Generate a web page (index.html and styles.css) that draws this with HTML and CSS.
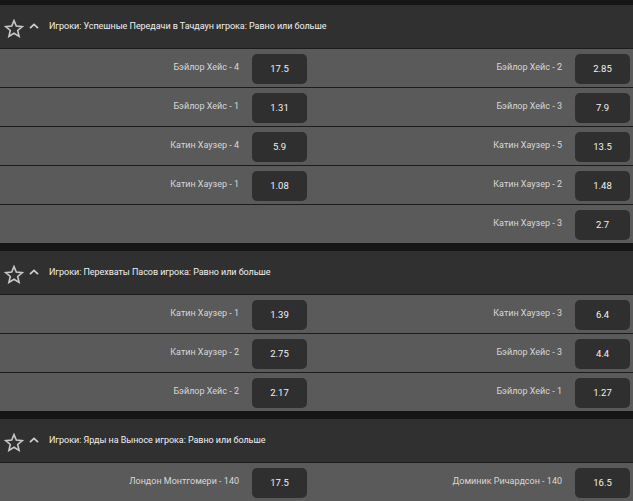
FILE: index.html
```html
<!DOCTYPE html>
<html>
<head>
<meta charset="utf-8">
<link rel="stylesheet" href="styles.css">
</head>
<body>
<div class="page">
  <section class="market">
    <div class="market-head">
      <svg class="star" viewBox="0 0 20 19" width="20" height="19"><path d="M10 1.6 L12.3 7.1 L18.3 7.6 L13.7 11.5 L15.1 17.4 L10 14.3 L4.9 17.4 L6.3 11.5 L1.7 7.6 L7.7 7.1 Z" fill="none" stroke="#c8c8c8" stroke-width="1.6" stroke-linejoin="miter"/></svg>
      <svg class="chev" viewBox="0 0 10 6" width="10" height="6"><path d="M1 5.2 L5 1.4 L9 5.2" fill="none" stroke="#cfcfcf" stroke-width="1.8"/></svg>
      <span class="title">Игроки: Успешные Передачи в Тачдаун игрока: Равно или больше</span>
    </div>
    <div class="row">
      <div class="cell"><span class="label">Бэйлор Хейс - 4</span><span class="odd">17.5</span></div>
      <div class="cell"><span class="label">Бэйлор Хейс - 2</span><span class="odd">2.85</span></div>
    </div>
    <div class="row">
      <div class="cell"><span class="label">Бэйлор Хейс - 1</span><span class="odd">1.31</span></div>
      <div class="cell"><span class="label">Бэйлор Хейс - 3</span><span class="odd">7.9</span></div>
    </div>
    <div class="row">
      <div class="cell"><span class="label">Катин Хаузер - 4</span><span class="odd">5.9</span></div>
      <div class="cell"><span class="label">Катин Хаузер - 5</span><span class="odd">13.5</span></div>
    </div>
    <div class="row">
      <div class="cell"><span class="label">Катин Хаузер - 1</span><span class="odd">1.08</span></div>
      <div class="cell"><span class="label">Катин Хаузер - 2</span><span class="odd">1.48</span></div>
    </div>
    <div class="row">
      <div class="cell"></div>
      <div class="cell"><span class="label">Катин Хаузер - 3</span><span class="odd">2.7</span></div>
    </div>
  </section>
  <section class="market">
    <div class="market-head">
      <svg class="star" viewBox="0 0 20 19" width="20" height="19"><path d="M10 1.6 L12.3 7.1 L18.3 7.6 L13.7 11.5 L15.1 17.4 L10 14.3 L4.9 17.4 L6.3 11.5 L1.7 7.6 L7.7 7.1 Z" fill="none" stroke="#c8c8c8" stroke-width="1.6" stroke-linejoin="miter"/></svg>
      <svg class="chev" viewBox="0 0 10 6" width="10" height="6"><path d="M1 5.2 L5 1.4 L9 5.2" fill="none" stroke="#cfcfcf" stroke-width="1.8"/></svg>
      <span class="title">Игроки: Перехваты Пасов игрока: Равно или больше</span>
    </div>
    <div class="row">
      <div class="cell"><span class="label">Катин Хаузер - 1</span><span class="odd">1.39</span></div>
      <div class="cell"><span class="label">Катин Хаузер - 3</span><span class="odd">6.4</span></div>
    </div>
    <div class="row">
      <div class="cell"><span class="label">Катин Хаузер - 2</span><span class="odd">2.75</span></div>
      <div class="cell"><span class="label">Бэйлор Хейс - 3</span><span class="odd">4.4</span></div>
    </div>
    <div class="row">
      <div class="cell"><span class="label">Бэйлор Хейс - 2</span><span class="odd">2.17</span></div>
      <div class="cell"><span class="label">Бэйлор Хейс - 1</span><span class="odd">1.27</span></div>
    </div>
  </section>
  <section class="market">
    <div class="market-head">
      <svg class="star" viewBox="0 0 20 19" width="20" height="19"><path d="M10 1.6 L12.3 7.1 L18.3 7.6 L13.7 11.5 L15.1 17.4 L10 14.3 L4.9 17.4 L6.3 11.5 L1.7 7.6 L7.7 7.1 Z" fill="none" stroke="#c8c8c8" stroke-width="1.6" stroke-linejoin="miter"/></svg>
      <svg class="chev" viewBox="0 0 10 6" width="10" height="6"><path d="M1 5.2 L5 1.4 L9 5.2" fill="none" stroke="#cfcfcf" stroke-width="1.8"/></svg>
      <span class="title">Игроки: Ярды на Выносе игрока: Равно или больше</span>
    </div>
    <div class="row">
      <div class="cell"><span class="label">Лондон Монтгомери - 140</span><span class="odd">17.5</span></div>
      <div class="cell"><span class="label">Доминик Ричардсон - 140</span><span class="odd">16.5</span></div>
    </div>
  </section>
</div>
</body>
</html>
```

FILE: styles.css
```css
html, body {
  margin: 0;
  padding: 0;
  background: #161616;
  overflow: hidden;
}
body {
  width: 633px;
  height: 501px;
  font-family: Roboto, "Noto Sans", sans-serif;
}
.page {
  width: 645px;
  margin-top: -3px;
}
.market {
  padding-top: 8px;
  background: #161616;
}
.market-head {
  height: 43px;
  background: #303030;
  display: flex;
  align-items: center;
  padding-left: 4px;
  box-sizing: border-box;
}
.star {
  display: block;
  margin-top: 3px;
}
.chev {
  display: block;
  margin-left: 5px;
  margin-top: -1px;
}
.title {
  margin-left: 10px;
  margin-top: -1px;
  font-size: 9px;
  color: #f0f0f0;
  letter-spacing: -0.05px;
}
.row {
  display: grid;
  grid-template-columns: 322px 323px;
  height: 38px;
  border-top: 1px solid #1c1c1c;
  background: #5a5a5a;
}
.cell {
  display: flex;
  align-items: center;
  justify-content: flex-end;
  padding-right: 15px;
}
.label {
  font-size: 9px;
  color: #d8d8d8;
  margin-right: 13px;
  margin-top: -3px;
}
.odd {
  width: 55px;
  height: 30px;
  border-radius: 5px;
  background: #2f2f2f;
  color: #f2f2f2;
  font-size: 9.5px;
  display: flex;
  align-items: center;
  justify-content: center;
  margin-top: 1px;
}
```
